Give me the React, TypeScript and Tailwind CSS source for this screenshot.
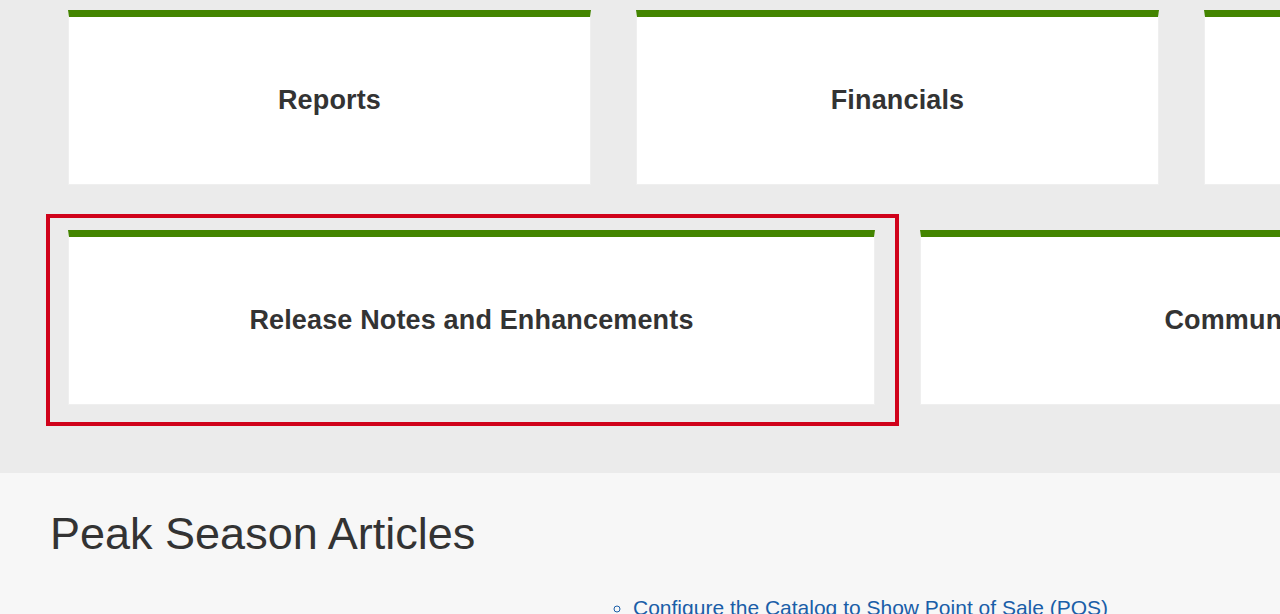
import React from "react";

// Category tiles: row one has three, row two has two
const topRow = ["Reports", "Financials", "Inventory"];
const bottomRow = ["Release Notes and Enhancements", "Community and Support"];

function Tile({ title }: { title: string }) {
  return (
    <div className="flex h-[175px] items-center justify-center border border-[#efefef] border-t-[7px] border-t-[#438400] bg-white">
      <span className="whitespace-nowrap text-[27px] font-bold leading-none tracking-[0.15px] text-[#333333]">{title}</span>
    </div>
  );
}

export default function App() {
  return (
    <div className="h-[614px] w-[1280px] overflow-hidden bg-[#f7f7f7] font-['Liberation_Sans',Arial,sans-serif]">
      {/* Tiles */}
      <section className="relative h-[473px] bg-[#ebebeb] pl-[68px] pt-[10px]">
        <div className="grid w-[1659px] grid-cols-3 gap-x-[45px]">
          {topRow.map((t) => (
            <Tile key={t} title={t} />
          ))}
        </div>
        <div className="mt-[45px] grid w-[1659px] grid-cols-2 gap-x-[45px]">
          {bottomRow.map((t) => (
            <Tile key={t} title={t} />
          ))}
        </div>
        {/* highlight annotation */}
        <div className="pointer-events-none absolute left-[46px] top-[214px] h-[212px] w-[853px] border-4 border-[#d0021b]" />
      </section>

      {/* Articles */}
      <section className="pl-[50px] pt-[36px]">
        <h2 className="text-[45px] font-normal leading-[1.1] text-[#333333]">Peak Season Articles</h2>
        <ul className="ml-[583px] mt-[34px] list-[circle] text-[21px] leading-[1.4] text-[#1a5ea8]">
          <li>
            <a href="#" className="hover:underline">
              Configure the Catalog to Show Point of Sale (POS)
            </a>
          </li>
        </ul>
      </section>
    </div>
  );
}
